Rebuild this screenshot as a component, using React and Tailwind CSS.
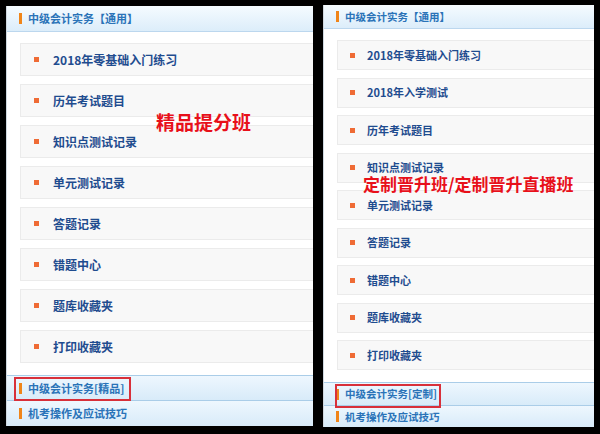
import React from 'react';

const leftItems = [
  '2018年零基础入门练习',
  '历年考试题目',
  '知识点测试记录',
  '单元测试记录',
  '答题记录',
  '错题中心',
  '题库收藏夹',
  '打印收藏夹',
];

const rightItems = [
  '2018年零基础入门练习',
  '2018年入学测试',
  '历年考试题目',
  '知识点测试记录',
  '单元测试记录',
  '答题记录',
  '错题中心',
  '题库收藏夹',
  '打印收藏夹',
];

const font = { fontFamily: '"Noto Sans CJK SC", "Noto Sans", sans-serif' };

const Bar = () => <span className="w-[3px] h-[11px] bg-[#f08519] shrink-0" />;

const Panel = ({ items, big, boxLabel, overlay }) => {
  const headH = big ? 'h-[26px]' : 'h-[24px]';
  const cardH = big ? 'h-[33px]' : 'h-[30px]';
  const gap = big ? 'gap-[8px]' : 'gap-[7.5px]';
  const text = big ? 'text-[12px]' : 'text-[11px]';
  const headText = big ? 'text-[11px]' : 'text-[10.5px]';
  return (
    <div className={`relative flex flex-col bg-white border-l border-[#cfd8e0] overflow-hidden ${big ? 'w-[307px] h-[420px] mt-[6px]' : 'w-[271px] h-[422px] mt-[5px]'}`}>
      <div className={`${headH} flex items-center gap-[6px] pl-[12px] bg-gradient-to-b from-[#f5fbff] to-[#dcedfa] border-b border-[#bcd7ee] shrink-0`}>
        <Bar />
        <span className={`${headText} font-bold text-[#2a73b8]`}>中级会计实务【通用】</span>
      </div>
      <div className={`flex flex-col ${gap} pt-[11px] ${big ? 'pl-[13px]' : 'pl-[13px]'}`}>
        {items.map((t) => (
          <div key={t} className={`${cardH} flex items-center bg-[#f8f8f8] border border-r-0 border-[#ebebeb]`}>
            <span className={`w-[5px] h-[5px] bg-[#ef6b35] ${big ? 'ml-[13px] mr-[14px]' : 'ml-[12px] mr-[12px]'}`} />
            <span className={`${text} font-bold text-[#1f4c8f]`}>{t}</span>
          </div>
        ))}
      </div>
      <div className="flex-1" />
      <div className={`relative ${big ? 'h-[26px]' : 'h-[24px]'} flex items-center gap-[6px] pl-[12px] bg-gradient-to-b from-[#eef7fe] to-[#d8ebf9] border-t border-b border-[#aacde8] shrink-0`}>
        <Bar />
        <span className={`${headText} font-bold text-[#2a73b8]`}>{boxLabel}</span>
        <span className={`absolute border-2 border-[#d8303a] ${big ? 'left-[7px] top-[1px] w-[117px] h-[24px]' : 'left-[11px] top-[1px] w-[106px] h-[24px]'}`} />
      </div>
      <div className={`${big ? 'h-[25px]' : 'h-[21px]'} flex items-center gap-[6px] pl-[12px] bg-gradient-to-b from-[#eef7fe] to-[#d8ebf9] shrink-0`}>
        <Bar />
        <span className={`${headText} font-bold text-[#2a73b8]`}>机考操作及应试技巧</span>
      </div>
      {overlay}
    </div>
  );
};

export default function App() {
  return (
    <div className="w-[600px] h-[434px] bg-black flex items-start overflow-hidden" style={font}>
      <div className="w-[6px] shrink-0" />
      <Panel
        items={leftItems}
        big
        boxLabel="中级会计实务[精品]"
        overlay={
          <span className="absolute left-[149px] top-[106px] text-[19px] font-bold text-[#e8101a] leading-none">精品提分班</span>
        }
      />
      <div className="w-[10px] shrink-0" />
      <Panel
        items={rightItems}
        boxLabel="中级会计实务[定制]"
        overlay={
          <span className="absolute left-[39px] top-[170px] text-[17px] font-bold text-[#e8101a] leading-none whitespace-nowrap">定制晋升班/定制晋升直播班</span>
        }
      />
    </div>
  );
}
